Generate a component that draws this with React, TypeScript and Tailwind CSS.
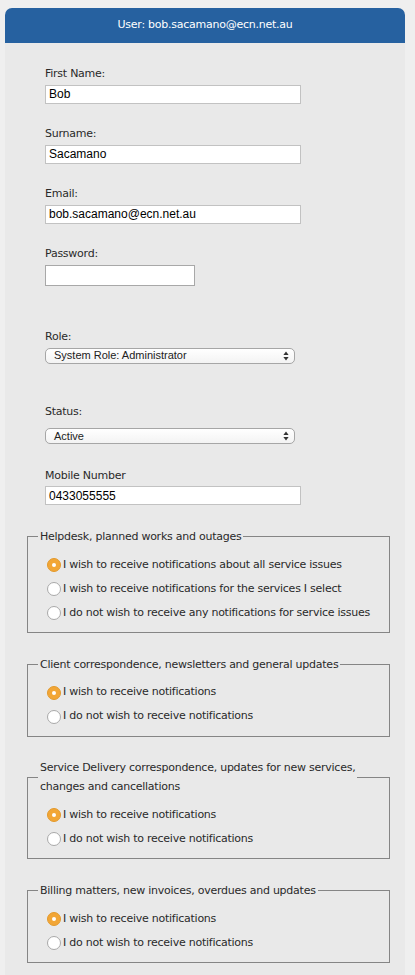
import React from "react";

const SANS = "font-['DejaVu_Sans',sans-serif] tracking-[-0.25px]";
const HELV = "font-['Liberation_Sans',Arial,sans-serif] tracking-normal";

type Group = { legend: React.ReactNode; options: string[] };

const GROUPS: Group[] = [
  {
    legend: "Helpdesk, planned works and outages",
    options: [
      "I wish to receive notifications about all service issues",
      "I wish to receive notifications for the services I select",
      "I do not wish to receive any notifications for service issues",
    ],
  },
  {
    legend: "Client correspondence, newsletters and general updates",
    options: [
      "I wish to receive notifications",
      "I do not wish to receive notifications",
    ],
  },
  {
    legend: (
      <>
        Service Delivery correspondence, updates for new services,
        <br />
        changes and cancellations
      </>
    ),
    options: [
      "I wish to receive notifications",
      "I do not wish to receive notifications",
    ],
  },
  {
    legend: "Billing matters, new invoices, overdues and updates",
    options: [
      "I wish to receive notifications",
      "I do not wish to receive notifications",
    ],
  },
];

function Radio({ checked }: { checked: boolean }) {
  if (checked) {
    return (
      <span className="flex h-[14px] w-[14px] shrink-0 items-center justify-center rounded-full border border-[#e39a2c] bg-[#f2a636]">
        <span className="h-[4px] w-[4px] rounded-full bg-white" />
      </span>
    );
  }
  return (
    <span className="h-[14px] w-[14px] shrink-0 rounded-full border border-[#a9a9a9] bg-white" />
  );
}

function SelectArrows() {
  return (
    <svg width="6" height="10" viewBox="0 0 6 10" className="shrink-0">
      <path d="M3 0.5 L5.6 4 L0.4 4 Z" fill="#333" />
      <path d="M3 9.5 L5.6 6 L0.4 6 Z" fill="#333" />
    </svg>
  );
}

function Label({ text, className }: { text: string; className: string }) {
  return <div className={`text-[11px] leading-[15px] text-[#2a2a2a] ${className}`}>{text}</div>;
}

function TextField({
  label,
  value,
  className,
}: {
  label: string;
  value: string;
  className: string;
}) {
  return (
    <div className={className}>
      <Label text={label} className="mb-[4px]" />
      <div
        className={`flex h-[19px] w-[256px] items-center border border-[#c2c2c2] bg-white pl-[3px] text-[12px] text-black ${HELV}`}
      >
        {value}
      </div>
    </div>
  );
}

function SelectBox({ value }: { value: string }) {
  return (
    <div
      className={`flex h-[16px] w-[250px] items-center justify-between rounded-[5px] border border-[#a6a6a6] bg-gradient-to-b from-white to-[#f3f3f3] pl-[8px] pr-[5px] text-[11px] text-[#222] ${HELV}`}
    >
      <span className="leading-none">{value}</span>
      <SelectArrows />
    </div>
  );
}

export default function App() {
  return (
    <div className={`min-h-screen bg-[#efefef] pl-[5px] pt-[8px] ${SANS}`}>
      <div className="w-[400px]">
        <div className="flex h-[35px] items-center justify-center rounded-t-[7px] bg-[#2661a0] text-[11px] text-white">
          User: bob.sacamano@ecn.net.au
        </div>
        <div className="bg-[#e9e9e9] pb-[40px] pl-[22px] pr-[15px] pt-[22.5px]">
          <div className="pl-[18px]">
            <TextField label="First Name:" value="Bob" className="" />
            <TextField label="Surname:" value="Sacamano" className="mt-[22px]" />
            <TextField
              label="Email:"
              value="bob.sacamano@ecn.net.au"
              className="mt-[22px]"
            />
            <div className="mt-[22px]">
              <Label text="Password:" className="mb-[4px]" />
              <div className="h-[21px] w-[150px] border border-[#a8a8a8] bg-white" />
            </div>
            <div className="mt-[43px]">
              <Label text="Role:" className="mb-[4px]" />
              <SelectBox value="System Role: Administrator" />
            </div>
            <div className="mt-[40px]">
              <Label text="Status:" className="mb-[9.5px]" />
              <SelectBox value="Active" />
            </div>
            <div className="mt-[23.5px]">
              <Label text="Mobile Number" className="mb-[3.5px]" />
              <div
                className={`flex h-[19px] w-[256px] items-center border border-[#c2c2c2] bg-white pl-[3px] text-[12px] text-black ${HELV}`}
              >
                0433055555
              </div>
            </div>
          </div>

          {GROUPS.map((g, gi) => (
            <fieldset
              key={gi}
              className="mt-[21.75px] border border-[#858585] px-[10px] pb-[7px]"
            >
              <legend className="px-[2px] text-[11px] leading-[19px] text-[#2a2a2a]">
                {g.legend}
              </legend>
              <div className="pt-[7px]">
                {g.options.map((o, oi) => (
                  <div key={oi} className="ml-[9px] flex h-[24px] items-center gap-[2px]">
                    <Radio checked={oi === 0} />
                    <span className="whitespace-nowrap text-[11px] text-[#2a2a2a]">{o}</span>
                  </div>
                ))}
              </div>
            </fieldset>
          ))}
        </div>
      </div>
    </div>
  );
}
